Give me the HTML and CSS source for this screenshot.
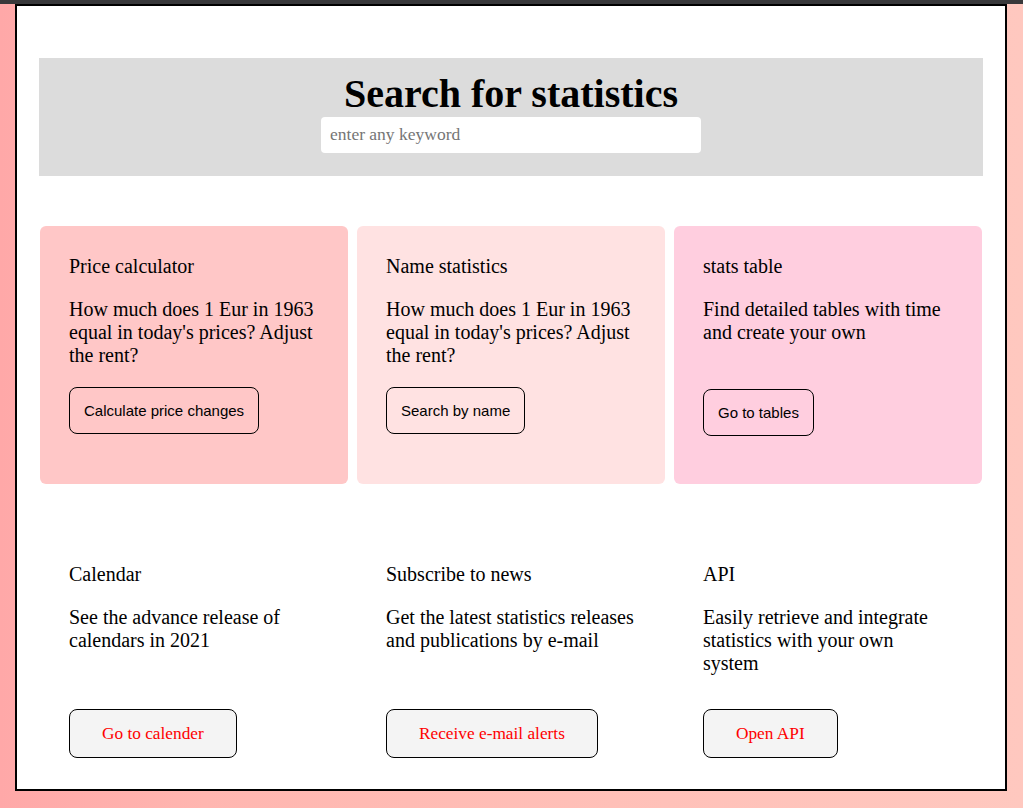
FILE: index.html
```html
<!DOCTYPE html>
<html lang="en">
<head>
<meta charset="utf-8">
<title>Search for statistics</title>
<link rel="stylesheet" href="styles.css">
</head>
<body>
<div class="topbar"></div>
<div class="page">
  <header class="search">
    <h1 class="search-title">Search for statistics</h1>
    <input class="search-input" type="text" placeholder="enter any keyword">
  </header>

  <section class="grid">
    <div class="card card--tile card--rose">
      <h2 class="card-title">Price calculator</h2>
      <p class="card-text">How much does 1 Eur in 1963 equal in today's prices? Adjust the rent?</p>
      <button class="card-btn">Calculate price changes</button>
    </div>
    <div class="card card--tile card--blush">
      <h2 class="card-title">Name statistics</h2>
      <p class="card-text">How much does 1 Eur in 1963 equal in today's prices? Adjust the rent?</p>
      <button class="card-btn">Search by name</button>
    </div>
    <div class="card card--tile card--pink">
      <h2 class="card-title">stats table</h2>
      <p class="card-text card-text--nudge">Find detailed tables with time and create your own</p>
      <button class="card-btn">Go to tables</button>
    </div>
  </section>

  <section class="grid">
    <div class="card card--plain">
      <h2 class="card-title">Calendar</h2>
      <p class="card-text card-text--tall">See the advance release of calendars in 2021</p>
      <button class="link-btn">Go to calender</button>
    </div>
    <div class="card card--plain">
      <h2 class="card-title">Subscribe to news</h2>
      <p class="card-text card-text--tall">Get the latest statistics releases and publications by e-mail</p>
      <button class="link-btn">Receive e-mail alerts</button>
    </div>
    <div class="card card--plain">
      <h2 class="card-title">API</h2>
      <p class="card-text card-text--tall">Easily retrieve and integrate statistics with your own system</p>
      <button class="link-btn">Open API</button>
    </div>
  </section>
</div>
</body>
</html>
```

FILE: styles.css
```css
html, body {
  margin: 0;
  padding: 0;
}

body {
  min-height: 808px;
  background: linear-gradient(to right, #ffa8a8 0%, #ffb6b0 20%, #ffc0b8 60%, #ffc8bf 100%);
  font-family: "Liberation Serif", "Times New Roman", serif;
  color: #000;
}

.topbar {
  height: 4px;
  background: #39393b;
}

.page {
  margin-left: 15px;
  width: 992px;
  height: 787px;
  box-sizing: border-box;
  border: 2px solid #000;
  background: #fff;
  padding: 52px 22px 0;
  overflow: hidden;
}

.search {
  background: #dcdcdc;
  padding: 13px 0 23px;
  text-align: center;
}

.search-title {
  margin: 0;
  font-size: 40px;
  line-height: 46px;
  font-weight: bold;
}

.search-input {
  display: block;
  margin: 0 auto;
  width: 380px;
  height: 36px;
  box-sizing: border-box;
  border: none;
  border-radius: 4px;
  background: #fff;
  padding: 0 9px 2px;
  font-family: "Liberation Serif", "Times New Roman", serif;
  font-size: 17.5px;
  color: #000;
  outline: none;
}

.search-input::placeholder {
  color: #757575;
}

.grid {
  display: grid;
  grid-template-columns: repeat(3, 308px);
  column-gap: 9px;
  align-items: start;
  margin: 50px 1px 0;
}

.card {
  padding: 29px 30px 50px 29px;
  border-radius: 6px;
}

.card--tile {
  box-sizing: border-box;
  height: 258px;
}

.card--rose { background: #ffc7c7; }
.card--blush { background: #ffe2e2; }
.card--pink { background: #ffcedf; }
.card--plain { background: transparent; padding-bottom: 0; }

.card-title {
  margin: 0;
  font-size: 20px;
  line-height: 23px;
  font-weight: normal;
}

.card-text {
  margin: 20px 0;
  font-size: 20px;
  line-height: 23px;
  min-height: 69px;
}

.card-text--nudge {
  min-height: 71px;
}

.card-text--tall {
  min-height: 83px;
}

.card-btn {
  display: inline-block;
  margin: 0;
  padding: 14px;
  border: 1px solid #000;
  border-radius: 8px;
  background: transparent;
  font-family: "Liberation Sans", Arial, sans-serif;
  font-size: 15px;
  line-height: 17px;
  color: #000;
}

.link-btn {
  display: inline-block;
  margin: 0;
  padding: 14px 32px;
  border: 1px solid #000;
  border-radius: 8px;
  background: #f4f4f4;
  font-family: "Liberation Serif", "Times New Roman", serif;
  font-size: 17.3px;
  line-height: 19px;
  color: #ff0000;
}
```
